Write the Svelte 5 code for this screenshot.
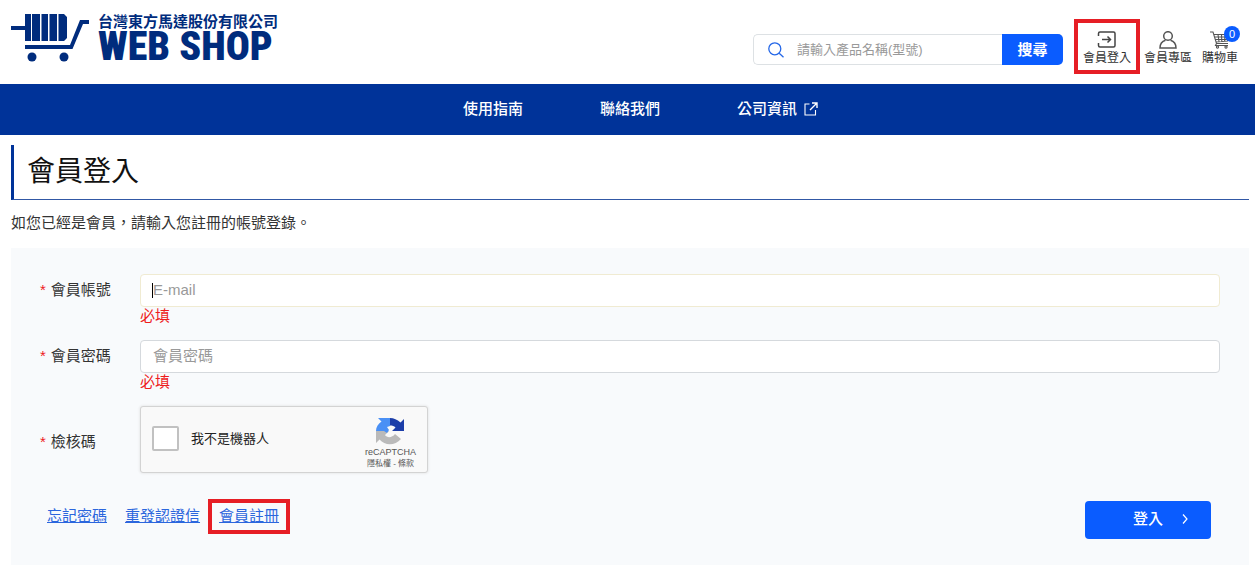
<script lang="ts">
	let keyword = $state('')
	let account = $state('')
	let password = $state('')
	let notRobot = $state(false)
	let cartCount = $state(0)
</script>

<header class="header">
	<a class="logo" href="#home">
		<svg width="78" height="50" viewBox="0 0 78 50" fill="#002c7d" aria-hidden="true">
			<path d="M0 12h14v4H0z" />
			<path d="M14 0h6v27h-6zM21 0h8v27h-8zM30.500 0h6.500v27h-6.500zM38.500 0h7.500v27h-7.500zM47.500 0h5.500l3 3v21l-3 3h-5.500z" />
			<path d="M14 31h45L69 6h9v4h-6L61.500 35H14z" />
			<circle cx="21" cy="43" r="4.5" />
			<circle cx="53" cy="43" r="4.5" />
		</svg>
		<span class="logo-text">
			<span class="company">台灣東方馬達股份有限公司</span>
			<span class="shop">WEB SHOP</span>
		</span>
	</a>

	<form class="search" onsubmit={(e) => e.preventDefault()}>
		<svg width="16" height="16" viewBox="0 0 16 16" fill="none" stroke="#2467e8" stroke-width="1.3" aria-hidden="true">
			<circle cx="6.8" cy="6.8" r="6" />
			<path d="M11.2 11.2l4.3 4" />
		</svg>
		<input type="search" bind:value={keyword} aria-label="搜尋" placeholder="請輸入產品名稱(型號)" />
		<button type="submit">搜尋</button>
	</form>

	<div class="tools">
		<a class="tool marked" href="#login">
			<svg width="20" height="18" viewBox="0 0 20 18" fill="none" stroke="#444" stroke-width="1.5" aria-hidden="true">
				<path d="M1.5 5V2.5Q1.5 1 3 1h13.5Q18 1 18 2.5v12q0 1.500-1.500 1.500H3q-1.500 0-1.500-1.500V12" />
				<path d="M5 8.500h8M10.500 5.500l3 3-3 3" />
			</svg>
			<span>會員登入</span>
		</a>
		<a class="tool" href="#member">
			<svg width="20" height="18" viewBox="0 0 20 18" fill="none" stroke="#555" stroke-width="1.5" aria-hidden="true">
				<circle cx="10" cy="5" r="4.3" />
				<path d="M7.500 9.300Q2 11 2 17h16q0-6-5.500-7.700" />
			</svg>
			<span>會員專區</span>
		</a>
		<a class="tool" href="#cart">
			<svg width="20" height="18" viewBox="0 0 20 18" fill="none" stroke="#555" stroke-width="1.1" aria-hidden="true">
				<path d="M0 1h3l3.500 11.500H18M4 3.500h15.500L17.500 10 5.800 11M4.800 6h14M5.400 8.500h12.800M8 3.500l1 7M11.500 3.500l.3 7M15 3.500l-.4 7M6.500 12.500l-1 2H18" />
				<circle cx="7.500" cy="16" r="1.100" />
				<circle cx="16" cy="16" r="1.100" />
			</svg>
			<span>購物車</span>
			<b class="badge">{cartCount}</b>
		</a>
	</div>
</header>

<nav class="nav">
	<a href="#guide">使用指南</a>
	<a href="#contact">聯絡我們</a>
	<a href="#company">
		公司資訊
		<svg width="14" height="14" viewBox="0 0 14 14" fill="none" stroke="#fff" stroke-width="1.4" aria-hidden="true">
			<path d="M5.500 2H1v11h10.500V8" stroke-width="1.100" />
			<path d="M8 1h5v5M13 1L6 8" />
		</svg>
	</a>
</nav>

<main>
	<h1>會員登入</h1>
	<p class="intro">如您已經是會員，請輸入您註冊的帳號登錄。</p>

	<form class="panel" onsubmit={(e) => e.preventDefault()}>
		<div class="row">
			<label for="account"><i>*</i>會員帳號</label>
			<div class="field active">
				<input id="account" type="text" bind:value={account} placeholder="E-mail" />
				<span class="error">必填</span>
			</div>
		</div>
		<div class="row">
			<label for="password"><i>*</i>會員密碼</label>
			<div class="field">
				<input id="password" type="password" bind:value={password} placeholder="會員密碼" />
				<span class="error">必填</span>
			</div>
		</div>
		<div class="row check">
			<label for="robot"><i>*</i>檢核碼</label>
			<div class="captcha">
				<input id="robot" type="checkbox" bind:checked={notRobot} />
				<label for="robot">我不是機器人</label>
				<div class="brand">
					<svg width="30" height="28" viewBox="0 0 30 28" aria-hidden="true">
						<path fill="#bababa" d="M1 14v12l3.500-3.500C10 29 20 29 26 22l-6-5C17 21 12 21 10 18l4-4z" />
						<path fill="#4a90f5" d="M15 1H3l3.500 3.500C3 7 1 10 1 14h8l3 2 2-3-2-3 3-1z" />
						<path fill="#1c3ea9" d="M15 1c4 0 7 1.500 10.500 4.500L29 2v12H17l3.500-3.500C19 9 17.500 8.500 15 8.500z" />
					</svg>
					<span class="name">reCAPTCHA</span>
					<span class="terms"><a href="#privacy">隱私權</a> - <a href="#terms">條款</a></span>
				</div>
			</div>
		</div>
		<div class="actions">
			<a href="#forgot">忘記密碼</a>
			<a href="#resend">重發認證信</a>
			<a class="marked" href="#register">會員註冊</a>
			<button type="submit">
				登入
				<svg width="6" height="10" viewBox="0 0 6 10" fill="none" stroke="#fff" stroke-width="1.200" aria-hidden="true">
					<path d="M1 .5L5 5 1 9.500" />
				</svg>
			</button>
		</div>
	</form>
</main>

<style>
	:global(body) {
		background: #fff;
		color: #333;
		font: 15px/18px 'Liberation Sans', 'Noto Sans CJK TC', sans-serif;
	}

	a {
		color: inherit;
		text-decoration: none;
	}

	input,
	button {
		box-sizing: border-box;
		font: inherit;
	}

	input::placeholder {
		color: #999;
		opacity: 1;
	}

	.marked {
		border: 4px solid #e61e25;
	}

	.header {
		display: flex;
		align-items: flex-start;
		box-sizing: border-box;
		height: 84px;
		padding: 0 17px 0 11px;
	}

	.logo {
		display: flex;
		gap: 9px;
		margin-top: 14px;
		color: #002c7d;
		white-space: nowrap;
	}

	.logo-text {
		display: flex;
		flex-direction: column;
	}

	.company {
		font-size: 15px;
		line-height: 15px;
		font-weight: 700;
	}

	.shop {
		font: 900 40px/36px 'Roboto Condensed', 'Liberation Sans Narrow', sans-serif;
	}

	.search {
		display: flex;
		align-items: center;
		box-sizing: border-box;
		width: 310px;
		height: 31px;
		margin: 34px 11px 0 auto;
		padding-left: 14px;
		border: 1px solid #dde1e4;
		border-right: 0;
		border-radius: 5px;
	}

	.search input {
		flex: 1;
		min-width: 0;
		padding: 0 13px;
		border: 0;
		outline: 0;
		background: none;
		font-size: 13px;
	}

	.search button {
		width: 61px;
		height: 31px;
		padding: 0;
		border: 0;
		border-radius: 0 5px 5px 0;
		background: #0a5cff;
		color: #fff;
		font-weight: 700;
	}

	.tools {
		display: flex;
		align-items: flex-start;
		margin-top: 19px;
	}

	.tool {
		position: relative;
		display: flex;
		flex-direction: column;
		align-items: center;
		margin: 12px 0 0 10px;
		font-size: 12px;
		line-height: 18px;
		white-space: nowrap;
	}

	.tool.marked {
		margin: 0 -6px 0 0;
		padding: 8px 5px 3px;
	}

	.badge {
		position: absolute;
		top: -5px;
		right: -2px;
		width: 16px;
		border-radius: 8px;
		background: #0a5cff;
		color: #fff;
		font-size: 11px;
		font-weight: 400;
		line-height: 16px;
		text-align: center;
	}

	.nav {
		display: flex;
		justify-content: center;
		gap: 77px;
		padding: 0 0 2px 26px;
		background: #003399;
		color: #fff;
		font-weight: 500;
		line-height: 49px;
	}

	.nav a {
		display: flex;
		align-items: center;
		gap: 7px;
	}

	main {
		padding: 10px 6px 2px 11px;
	}

	h1 {
		margin: 0;
		padding-left: 13px;
		border-left: 3px solid #003399;
		border-bottom: 1px solid #3158a5;
		color: #111;
		font-size: 28px;
		font-weight: 400;
		line-height: 54px;
	}

	.intro {
		margin: 14px 0 16px;
	}

	.panel {
		padding: 26px 29px 25px;
		background: #f8fafc;
	}

	.row {
		display: grid;
		grid-template-columns: 100px 1fr;
		margin-bottom: 15px;
	}

	.row > label {
		line-height: 31px;
	}

	.row i {
		margin-right: 5px;
		color: #ee1c1c;
		font-style: normal;
	}

	.field {
		position: relative;
	}

	.field input {
		display: block;
		width: 100%;
		height: 33px;
		padding: 0 12px 2px;
		border: 1px solid #d5d9dd;
		border-radius: 4px;
		outline: 0;
		background: #fff;
	}

	.field.active input {
		border-color: #f0ebd2;
	}

	.field.active::before {
		content: '';
		position: absolute;
		top: 9px;
		left: 12px;
		width: 1px;
		height: 15px;
		background: #000;
	}

	.error {
		display: block;
		color: #ee1c1c;
	}

	.check {
		align-items: center;
		margin-bottom: 26px;
	}

	.check > label {
		padding-top: 3px;
	}

	.captcha {
		display: flex;
		align-items: center;
		box-sizing: border-box;
		width: 288px;
		height: 67px;
		padding: 0 11px;
		border: 1px solid #d3d3d3;
		border-radius: 3px;
		background: #f9f9f9;
		box-shadow: 0 0 3px #ddd;
	}

	.captcha input {
		appearance: none;
		width: 27px;
		height: 25px;
		margin: 0 12px 3px 0;
		border: 2px solid #c1c1c1;
		border-radius: 2px;
		background: #fff;
	}

	.captcha input:checked {
		background: #0a5cff;
	}

	.captcha label {
		margin-bottom: 2px;
		color: #222;
		font-size: 13px;
	}

	.brand {
		display: flex;
		flex-direction: column;
		align-items: center;
		margin-left: auto;
		padding-top: 5px;
		color: #555;
	}

	.name {
		font-size: 9px;
		line-height: 14px;
	}

	.terms {
		font-size: 8px;
		line-height: 9px;
	}

	.actions {
		display: flex;
		align-items: flex-start;
		padding: 0 9px 0 7px;
	}

	.actions a {
		margin: 8px 18px 0 0;
		color: #2b66dd;
		text-decoration: underline;
	}

	.actions a.marked {
		margin: 0 0 0 -10px;
		padding: 4px 7px 5px;
	}

	.actions button {
		display: flex;
		align-items: center;
		justify-content: flex-end;
		gap: 19px;
		width: 126px;
		height: 38px;
		margin: 2px 0 1px auto;
		padding: 0 23px 2px;
		border: 0;
		border-radius: 4px;
		background: #0a5cff;
		color: #fff;
		font-weight: 500;
	}
</style>
